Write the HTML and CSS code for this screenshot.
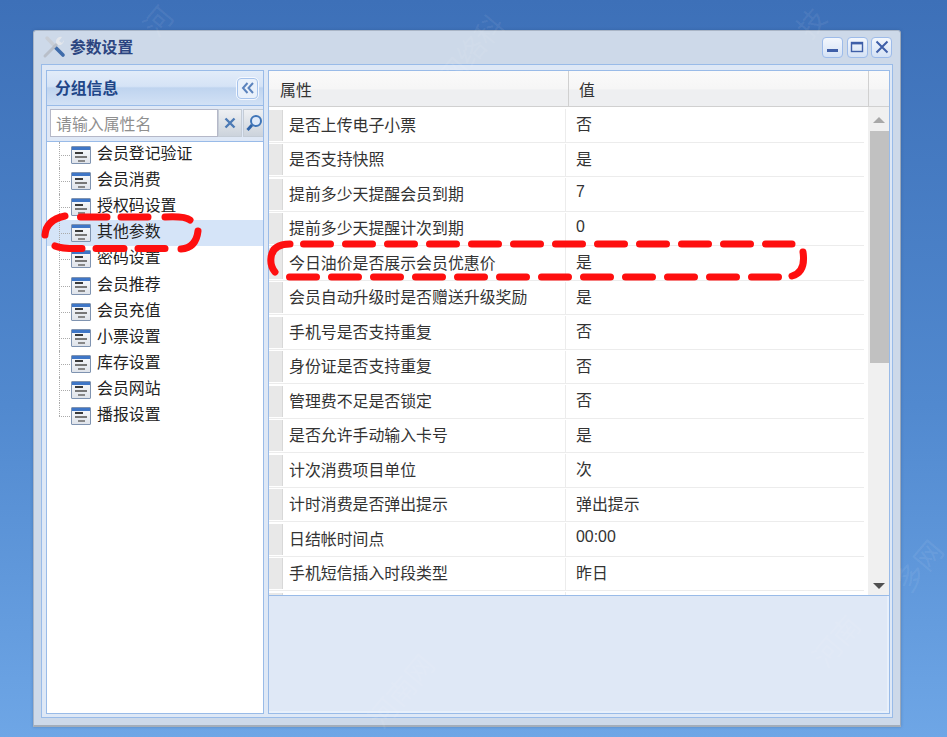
FILE: index.html
```html
<!DOCTYPE html>
<html lang="zh-CN">
<head>
<meta charset="utf-8">
<title>参数设置</title>
<link rel="stylesheet" href="styles.css">
</head>
<body>
<div class="window">
  <div class="titlebar">
    <svg class="title-icon" width="24" height="24" viewBox="0 0 24 24">
      <path d="M5 3 L21 20" stroke="#c9ced6" stroke-width="3.4" stroke-linecap="round"/>
      <path d="M13 12 L21 20" stroke="#3f6cab" stroke-width="3.6" stroke-linecap="round"/>
      <path d="M3 21 L16 8" stroke="#b9bfc9" stroke-width="3" stroke-linecap="round"/>
      <path d="M14 8 A5 5 0 0 1 20 2 L17 6 L20 8 L22 5 A5 5 0 0 1 16 10 Z" fill="#e4e7ec"/>
    </svg>
    <span class="title-text">参数设置</span>
    <div class="win-btns">
      <button class="win-btn"><svg width="14" height="14" viewBox="0 0 14 14"><rect x="1" y="9" width="11" height="3" fill="#3f5fa8"/></svg></button>
      <button class="win-btn"><svg width="14" height="14" viewBox="0 0 14 14"><rect x="1.5" y="2.5" width="11" height="9" fill="none" stroke="#3f5fa8" stroke-width="1.4"/><rect x="1.5" y="2" width="11" height="2.4" fill="#3f5fa8"/></svg></button>
      <button class="win-btn"><svg width="14" height="14" viewBox="0 0 14 14"><path d="M1.5 1.5 L12.5 12.5 M12.5 1.5 L1.5 12.5" stroke="#3f5fa8" stroke-width="2"/></svg></button>
    </div>
  </div>
  <div class="body">
    <aside class="side">
      <div class="side-head">
        <span class="side-title">分组信息</span>
        <span class="collapse"><svg width="14" height="12" viewBox="0 0 14 12"><path d="M6.5 1 L2 6 L6.5 11 M12 1 L7.5 6 L12 11" fill="none" stroke="#5b83bd" stroke-width="2"/></svg></span>
      </div>
      <div class="search">
        <span class="search-input">请输入属性名</span>
        <span class="search-btn clear"><svg width="14" height="14" viewBox="0 0 14 14"><path d="M2.5 2.5 L11.5 11.5 M11.5 2.5 L2.5 11.5" stroke="#4c7ab5" stroke-width="2.4"/></svg></span>
        <span class="search-btn find"><svg width="18" height="18" viewBox="0 0 18 18"><circle cx="11" cy="7" r="5" fill="#dfeafa" stroke="#3f75b8" stroke-width="2"/><path d="M7 11 L2.5 16" stroke="#2f63a8" stroke-width="3"/></svg></span>
      </div>
      <ul class="tree">
        <li class="node"><i class="ico"><b></b><b></b><b></b></i><span>会员登记验证</span></li>
        <li class="node"><i class="ico"><b></b><b></b><b></b></i><span>会员消费</span></li>
        <li class="node"><i class="ico"><b></b><b></b><b></b></i><span>授权码设置</span></li>
        <li class="node selected"><i class="ico"><b></b><b></b><b></b></i><span>其他参数</span></li>
        <li class="node"><i class="ico"><b></b><b></b><b></b></i><span>密码设置</span></li>
        <li class="node"><i class="ico"><b></b><b></b><b></b></i><span>会员推荐</span></li>
        <li class="node"><i class="ico"><b></b><b></b><b></b></i><span>会员充值</span></li>
        <li class="node"><i class="ico"><b></b><b></b><b></b></i><span>小票设置</span></li>
        <li class="node"><i class="ico"><b></b><b></b><b></b></i><span>库存设置</span></li>
        <li class="node"><i class="ico"><b></b><b></b><b></b></i><span>会员网站</span></li>
        <li class="node last"><i class="ico"><b></b><b></b><b></b></i><span>播报设置</span></li>
      </ul>
    </aside>
    <main class="main">
      <div class="grid">
        <div class="grid-head">
          <div class="h-prop">属性</div>
          <div class="h-val">值</div>
          <div class="h-rest"></div>
        </div>
        <div class="grid-body">
          <div class="rows">
            <div class="row"><i class="mark"></i><span class="prop">是否上传电子小票</span><span class="val">否</span></div>
            <div class="row"><i class="mark"></i><span class="prop">是否支持快照</span><span class="val">是</span></div>
            <div class="row"><i class="mark"></i><span class="prop">提前多少天提醒会员到期</span><span class="val num">7</span></div>
            <div class="row"><i class="mark"></i><span class="prop">提前多少天提醒计次到期</span><span class="val num">0</span></div>
            <div class="row"><i class="mark"></i><span class="prop">今日油价是否展示会员优惠价</span><span class="val">是</span></div>
            <div class="row"><i class="mark"></i><span class="prop">会员自动升级时是否赠送升级奖励</span><span class="val">是</span></div>
            <div class="row"><i class="mark"></i><span class="prop">手机号是否支持重复</span><span class="val">否</span></div>
            <div class="row"><i class="mark"></i><span class="prop">身份证是否支持重复</span><span class="val">否</span></div>
            <div class="row"><i class="mark"></i><span class="prop">管理费不足是否锁定</span><span class="val">否</span></div>
            <div class="row"><i class="mark"></i><span class="prop">是否允许手动输入卡号</span><span class="val">是</span></div>
            <div class="row"><i class="mark"></i><span class="prop">计次消费项目单位</span><span class="val">次</span></div>
            <div class="row"><i class="mark"></i><span class="prop">计时消费是否弹出提示</span><span class="val">弹出提示</span></div>
            <div class="row"><i class="mark"></i><span class="prop">日结帐时间点</span><span class="val num">00:00</span></div>
            <div class="row"><i class="mark"></i><span class="prop">手机短信插入时段类型</span><span class="val">昨日</span></div>
            <div class="row"><i class="mark"></i><span class="prop"></span><span class="val"></span></div>
          </div>
          <div class="scrollbar">
            <svg class="arrow" width="12" height="6" viewBox="0 0 12 6"><path d="M0 6 L6 0 L12 6 Z" fill="#a8a8a8"/></svg>
            <div class="track"><div class="thumb"></div></div>
            <svg class="arrow" width="12" height="6" viewBox="0 0 12 6"><path d="M0 0 L12 0 L6 6 Z" fill="#505050"/></svg>
          </div>
        </div>
      </div>
      <div class="detail"></div>
    </main>
  </div>
</div>
<div class="watermarks">
  <span class="wm wm1">河</span>
  <span class="wm wm2">网络科</span>
  <span class="wm wm3">技</span>
  <span class="wm wm4">多网</span>
  <span class="wm wm5">河南</span>
  <span class="wm wm6">河南网</span>
</div>
<svg class="marks" width="947" height="737" viewBox="0 0 947 737">
  <path class="solid" d="M65 216 Q46 220 45 235"/>
  <path class="solid" d="M80.5 217 L107 217 M121 217 L148 217 M165 217 Q185 216 190 220"/>
  <path class="solid" d="M55 246 Q62 249 82 248.5 M96 248.5 L124 248.5 M138 248.5 L165 248.5 M181 249 Q196 248 198 231"/>
  <path class="solid" d="M290 244 Q272 244 271 258 Q270 266 275 272"/>
  <path class="dashed" d="M303.5 244 L792 244"/>
  <path class="dashed" d="M289.5 277 L780 277"/>
  <path class="solid" d="M803 252 Q806 272 792 276"/>
</svg>
</body>
</html>
```
FILE: styles.css
```css
* { box-sizing: border-box; }
html, body { margin: 0; height: 737px; overflow: hidden; }
body {
  position: relative;
  width: 947px;
  padding: 30px 46px 0 33px;
  background: linear-gradient(180deg, #3d70b8 0%, #5189cf 55%, #6ea6e6 100%);
  font-family: "Noto Sans CJK SC", "Liberation Sans", sans-serif;
  font-size: 15.9px;
  color: #222;
}
.watermarks { position: absolute; inset: 0; overflow: hidden; pointer-events: none; }
.wm {
  position: absolute;
  color: rgba(255, 255, 255, 0.08);
  font-size: 28px;
  line-height: 40px;
  white-space: nowrap;
  transform: rotate(-50deg);
}
.wm1 { left: 143px; top: 0; }
.wm2 { left: 428px; top: 30px; }
.wm3 { left: 796px; top: 2px; }
.wm4 { left: 890px; top: 545px; }
.wm5 { left: 807px; top: 620px; }
.wm6 { left: 358px; top: 670px; }

.window {
  position: relative;
  width: 868px;
  height: 697px;
  background: #cdd9e9;
  border: 1px solid #a9b5c6;
  border-right-color: #9ba8ba;
  border-bottom: 2px solid #a4aeba;
  border-radius: 3px 3px 0 0;
  padding: 0 7px 7px 7px;
  display: flex;
  flex-direction: column;
  box-shadow: 0 0 3px rgba(40, 70, 120, .35);
}
.titlebar {
  height: 33px;
  flex: none;
  display: flex;
  align-items: center;
  gap: 4px;
  padding: 0 0 1px 1px;
}
.title-icon { flex: none; }
.title-text { font-size: 15.8px; font-weight: 700; color: #2c4580; line-height: 20px; }
.win-btns { margin-left: auto; display: flex; gap: 3.5px; margin-right: 1px; }
.win-btn {
  width: 21px; height: 21px; padding: 0;
  display: flex; align-items: center; justify-content: center;
  background: linear-gradient(180deg, #f3f7fd, #d5e2f5);
  border: 1px solid #9dbbe9;
  border-radius: 4px;
}

.body {
  flex: 1;
  min-height: 0;
  display: flex;
  gap: 4px;
  background: #dee8f6;
  border: 1px solid #99bbe8;
  padding: 5px 2px 3px 4px;
}
.side {
  width: 218px;
  flex: none;
  display: flex;
  flex-direction: column;
  background: #fff;
  border: 1px solid #99bbe8;
}
.side-head {
  height: 35px;
  flex: none;
  display: flex;
  align-items: center;
  justify-content: space-between;
  padding: 0 5px 0 8px;
  background: linear-gradient(180deg, #e2ecf9 0%, #d5e3f6 45%, #bfd4ef 50%, #d2e1f5 100%);
  border-bottom: 1px solid #99bbe8;
}
.side-title { font-size: 15.8px; font-weight: 700; color: #1f4688; line-height: 20px; }
.collapse {
  width: 21px; height: 21px;
  display: flex; align-items: center; justify-content: center;
  background: #e9f1fb;
  border: 1px solid #a6c3ec;
  border-radius: 4px;
  outline: 1px solid #f4f8fe;
}
.search {
  height: 36px;
  flex: none;
  display: flex;
  padding: 3px 0 4px 3px;
  background: #dfe8f6;
  border-bottom: 1px solid #99bbe8;
  gap: 1px;
  overflow: hidden;
}
.search-input {
  flex: none;
  width: 168px;
  height: 28px;
  background: #fff;
  border: 1px solid #b5b8c8;
  color: #8f8f8f;
  padding-left: 5px;
  line-height: 28px;
  white-space: nowrap;
}
.search-btn {
  flex: none;
  height: 28px;
  display: flex; align-items: center; justify-content: center;
  background: linear-gradient(180deg, #eef0f3, #ccd3dc);
  border: 1px solid #c4ccd6;
  overflow: hidden;
}
.clear { width: 24px; margin-left: -1px; }
.find { width: 21px; }
.tree {
  list-style: none;
  margin: 0;
  padding: 0;
  flex: 1;
}
.node {
  position: relative;
  height: 26.1px;
  display: flex;
  align-items: center;
  padding-left: 24px;
  gap: 6px;
  color: #222;
}
.node::before {
  content: "";
  position: absolute;
  left: 12px; top: 0; bottom: 0;
  border-left: 1px dotted #aaa;
}
.node.last::before { bottom: 50%; }
.node::after {
  content: "";
  position: absolute;
  left: 12px; top: 50%; width: 11px;
  border-top: 1px dotted #aaa;
}
.node.selected { background: #d5e4f8; }
.node span { line-height: 22px; position: relative; top: -2px; }
.ico {
  width: 20px; height: 18px;
  flex: none;
  display: flex;
  flex-direction: column;
  justify-content: center;
  gap: 2px;
  padding: 4px 3px 1px 3px;
  background: linear-gradient(180deg, #3f76c6 0, #3f76c6 3px, #f4f6f9 3px, #dfe3ea 100%);
  border: 1px solid #7f93b0;
  border-radius: 1px;
}
.ico b { display: block; height: 2px; background: #3a3a3a; width: 8px; }
.ico b:nth-child(2) { width: 12px; background: #777; }
.ico b:nth-child(3) { width: 7px; background: #888; margin-left: 3px; }

.main {
  flex: 1;
  min-width: 0;
  display: flex;
  flex-direction: column;
  border: 1px solid #99bbe8;
  background: #dfe8f6;
}
.grid { height: 525px; flex: none; background: #fff; display: flex; flex-direction: column; border-bottom: 1px solid #99bbe8; }
.grid-head {
  height: 36px;
  flex: none;
  display: flex;
  background: linear-gradient(180deg, #fafafa 0%, #f6f6f6 50%, #eeeff1 55%, #eeeff1 100%);
  border-bottom: 1px solid #d0d0d0;
}
.h-prop, .h-val {
  line-height: 38px;
  padding-left: 11px;
  border-right: 1px solid #d0d0d0;
  color: #333;
}
.h-prop { width: 300px; }
.h-val { width: 300px; padding-left: 10px; }
.h-rest { flex: 1; }
.grid-body { flex: 1; min-height: 0; display: flex; overflow: hidden; }
.rows { width: 595px; flex: none; overflow: hidden; padding-top: 1px; }
.row {
  height: 34.5px;
  display: flex;
  align-items: center;
  gap: 6px;
  border-bottom: 1px solid #ececec;
  padding-top: 1px;
  background: #fff;
}
.mark {
  width: 14px;
  height: 31px;
  flex: none;
  background: #e8e8e8;
  border-right: 1px solid #d8d8d8;
}
.prop { width: 270px; flex: none; position: relative; top: -1px; white-space: nowrap; color: #333; }
.val {
  padding-left: 10px;
  color: #333;
  align-self: stretch;
  line-height: 30px;
  border-left: 1px solid #ececec;
}
.num { font-family: "Liberation Sans", "Noto Sans CJK SC", sans-serif; line-height: 27px; }
.scrollbar {
  width: 26px;
  margin-left: auto;
  flex: none;
  display: flex;
  flex-direction: column;
  align-items: center;
  background: #f0f0f0;
  padding: 10px 0 6px;
  border-left: 4px solid #fff;
}
.arrow { flex: none; display: block; }
.track { flex: 1; width: 100%; padding: 8px 0 0 2px; }
.thumb { height: 232px; background: #c1c1c1; }
.detail { flex: 1; background: #dfe8f6; border-right: 2px solid #e8f0fb; border-bottom: 2px solid #e8f0fb; }

.marks { position: absolute; left: 0; top: 0; pointer-events: none; }
.marks path { fill: none; stroke: #fe0f0f; stroke-width: 7; stroke-linecap: round; }
.marks .dashed { stroke-dasharray: 27 15; }
```
